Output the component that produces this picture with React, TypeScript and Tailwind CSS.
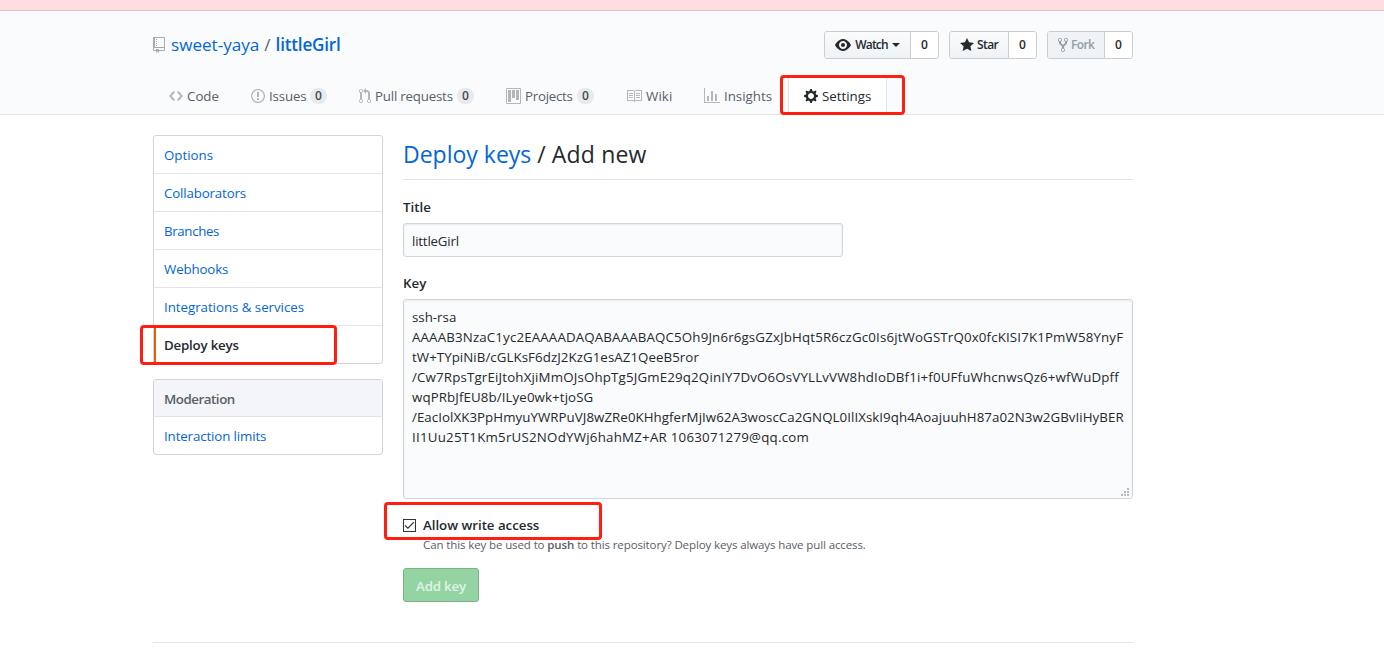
import type { ReactNode } from 'react';

const ICONS = {
    repo: 'M4 9H3V8h1v1zm0-3H3v1h1V6zm0-2H3v1h1V4zm0-2H3v1h1V2zm8-1v12c0 .55-.45 1-1 1H6v2l-1.5-1.5L3 16v-2H1c-.55 0-1-.45-1-1V1c0-.55.45-1 1-1h10c.55 0 1 .45 1 1zm-1 10H1v2h2v-1h3v1h5v-2zm0-10H2v9h9V1z',
    eye: 'M8.06 2C3 2 0 8 0 8s3 6 8.06 6C13 14 16 8 16 8s-3-6-7.94-6zM8 12c-2.2 0-4-1.78-4-4 0-2.2 1.8-4 4-4 2.22 0 4 1.8 4 4 0 2.22-1.78 4-4 4zm2-4c0 1.11-.89 2-2 2-1.11 0-2-.89-2-2 0-1.11.89-2 2-2 1.11 0 2 .89 2 2z',
    star: 'M14 6l-4.9-.64L7 1 4.9 5.36 0 6l3.6 3.26L2.67 14 7 11.67 11.33 14l-.93-4.74L14 6z',
    fork: 'M8 1a1.993 1.993 0 0 0-1 3.72V6L5 8 3 6V4.72A1.993 1.993 0 0 0 2 1a1.993 1.993 0 0 0-1 3.72V6.5l3 3v1.78A1.993 1.993 0 0 0 5 15a1.993 1.993 0 0 0 1-3.72V9.5l3-3V4.72A1.993 1.993 0 0 0 8 1zM2 4.2C1.34 4.2.8 3.65.8 3c0-.65.55-1.2 1.2-1.2.65 0 1.2.55 1.2 1.2 0 .65-.55 1.2-1.2 1.2zm3 10c-.66 0-1.2-.55-1.2-1.2 0-.65.55-1.2 1.2-1.2.65 0 1.2.55 1.2 1.2 0 .65-.55 1.2-1.2 1.2zm3-10c-.66 0-1.2-.55-1.2-1.2 0-.65.55-1.2 1.2-1.2.65 0 1.2.55 1.2 1.2 0 .65-.55 1.2-1.2 1.2z',
    code: 'M9.5 3L8 4.5 11.5 8 8 11.5 9.5 13 14 8 9.5 3zm-5 0L0 8l4.5 5L6 11.5 2.5 8 6 4.5 4.5 3z',
    issue: 'M7 2.3c3.14 0 5.7 2.56 5.7 5.7s-2.56 5.7-5.7 5.7A5.71 5.71 0 0 1 1.3 8c0-3.14 2.56-5.7 5.7-5.7zM7 1C3.14 1 0 4.14 0 8s3.14 7 7 7 7-3.14 7-7-3.14-7-7-7zm1 3H6v5h2V4zm0 6H6v2h2v-2z',
    pull: 'M11 11.28V5c-.03-.78-.34-1.47-.94-2.06C9.46 2.35 8.78 2.03 8 2H7V0L4 3l3 3V4h1c.27.02.48.11.69.31.21.2.3.42.31.69v6.28A1.993 1.993 0 0 0 10 15a1.993 1.993 0 0 0 1-3.72zm-1 2.92c-.66 0-1.2-.55-1.2-1.2 0-.65.55-1.2 1.2-1.2.65 0 1.2.55 1.2 1.2 0 .65-.55 1.2-1.2 1.2zM4 3c0-1.11-.89-2-2-2a1.993 1.993 0 0 0-1 3.72v6.56A1.993 1.993 0 0 0 2 15a1.993 1.993 0 0 0 1-3.72V4.72c.59-.34 1-.98 1-1.72zm-.8 10c0 .66-.55 1.2-1.2 1.2-.65 0-1.2-.55-1.2-1.2 0-.65.55-1.2 1.2-1.2.65 0 1.2.55 1.2 1.2zM2 4.2C1.34 4.2.8 3.65.8 3c0-.65.55-1.2 1.2-1.2.65 0 1.2.55 1.2 1.2 0 .65-.55 1.2-1.2 1.2z',
    project: 'M10 12h3V2h-3v10zm-4-2h3V2H6v8zm-4 4h3V2H2v12zm-1 1h13V1H1v14zM14 0H1a1 1 0 0 0-1 1v14a1 1 0 0 0 1 1h13a1 1 0 0 0 1-1V1a1 1 0 0 0-1-1z',
    book: 'M3 5h4v1H3V5zm0 3h4V7H3v1zm0 2h4V9H3v1zm11-5h-4v1h4V5zm0 2h-4v1h4V7zm0 2h-4v1h4V9zm2-6v9c0 .55-.45 1-1 1H9.5l-1 1-1-1H2c-.55 0-1-.45-1-1V3c0-.55.45-1 1-1h5.5l1 1 1-1H15c.55 0 1 .45 1 1zm-8 .5L7.5 3H2v9h6V3.5zm7-.5H9.5l-.5.5V12h6V3z',
    graph: 'M16 14v1H0V0h1v14h15zM5 13H3V8h2v5zm4 0H7V3h2v10zm4 0h-2V6h2v7z',
    gear: 'M14 8.77v-1.6l-1.94-.64-.45-1.09.88-1.84-1.13-1.13-1.81.91-1.09-.45-.69-1.92h-1.6l-.63 1.94-1.11.45-1.84-.88-1.13 1.13.91 1.81-.45 1.09L0 7.23v1.59l1.94.64.45 1.09-.88 1.84 1.13 1.13 1.81-.91 1.09.45.69 1.92h1.59l.63-1.94 1.11-.45 1.84.88 1.13-1.13-.92-1.81.47-1.09L14 8.75v.02zM7 11c-1.66 0-3-1.34-3-3s1.34-3 3-3 3 1.34 3 3-1.34 3-3 3z',
};

interface OcticonProps {
    name: keyof typeof ICONS;
    width: number;
    className?: string;
}

function Octicon({ name, width, className = '' }: OcticonProps) {
    return (
        <svg width={width} height={16} viewBox={`0 0 ${width} 16`} fill="currentColor" className={`shrink-0 ${className}`}>
            <path fillRule="evenodd" d={ICONS[name]} />
        </svg>
    );
}

interface SocialButtonProps {
    icon: ReactNode;
    label: string;
    labelClass: string;
    className: string;
    caret?: boolean;
    disabled?: boolean;
}

function SocialButton({ icon, label, labelClass, className, caret, disabled }: SocialButtonProps) {
    return (
        <div className={`flex h-7 overflow-hidden rounded-[3px] border border-[#cbced1] text-[12px] font-semibold ${className}`}>
            <button
                disabled={disabled}
                className={`flex flex-1 items-center border-r border-[#cbced1] pl-[10px] ${disabled ? 'bg-[#eff3f6] text-[#959da5]' : 'bg-linear-to-b from-[#fafbfc] to-[#eff3f6] text-[#24292e]'}`}
            >
                {icon}
                <span className={`pt-px whitespace-nowrap ${labelClass}`}>{label}</span>
                {caret && <span className="ml-[3px] border-x-4 border-t-4 border-x-transparent border-t-[#24292e]" />}
            </button>
            <span className="flex w-[27px] items-center justify-center bg-white pt-px text-[#24292e]">0</span>
        </div>
    );
}

interface TabProps {
    icon: keyof typeof ICONS;
    iconWidth: number;
    label: string;
    className: string;
    labelClass: string;
    count?: number;
}

function Tab({ icon, iconWidth, label, className, labelClass, count }: TabProps) {
    return (
        <a className={`flex h-full shrink-0 items-center text-[#586069] ${className}`}>
            <Octicon name={icon} width={iconWidth} className="text-[#b4b7ba]" />
            <span className={`whitespace-nowrap ${labelClass}`}>{label}</span>
            {count !== undefined && (
                <span className="ml-1 flex h-4 w-[17px] shrink-0 items-center justify-center rounded-full bg-[#e8e9eb] text-[12px] font-semibold text-[#444d56]">
                    {count}
                </span>
            )}
        </a>
    );
}

const MENU = [
    { label: 'Options', spacing: 'tracking-[0px]' },
    { label: 'Collaborators', spacing: 'tracking-[-0.15px]' },
    { label: 'Branches', spacing: 'tracking-[-0.35px]' },
    { label: 'Webhooks', spacing: 'tracking-[-0.15px]' },
    { label: 'Integrations & services', spacing: 'tracking-[-0.03px]' },
];

const KEY_LINES = [
    { text: 'ssh-rsa', spacing: 'tracking-[0px]' },
    { text: 'AAAAB3NzaC1yc2EAAAADAQABAAABAQC5Oh9Jn6r6gsGZxJbHqt5R6czGc0Is6jtWoGSTrQ0x0fcKISI7K1PmW58YnyF', spacing: 'tracking-[0.15px]' },
    { text: 'tW+TYpiNiB/cGLKsF6dzJ2KzG1esAZ1QeeB5ror', spacing: 'tracking-[0.06px]' },
    { text: '/Cw7RpsTgrEiJtohXjiMmOJsOhpTg5JGmE29q2QinIY7DvO6OsVYLLvVW8hdIoDBf1i+f0UFfuWhcnwsQz6+wfWuDpff', spacing: 'tracking-[0.165px]' },
    { text: 'wqPRbJfEU8b/ILye0wk+tjoSG', spacing: 'tracking-[0.1px]' },
    { text: '/EacIolXK3PpHmyuYWRPuVJ8wZRe0KHhgferMjIw62A3woscCa2GNQL0IlIXskI9qh4AoajuuhH87a02N3w2GBvIiHyBER', spacing: 'tracking-[0.055px]' },
    { text: 'II1Uu25T1Km5rUS2NOdYWj6hahMZ+AR 1063071279@qq.com', spacing: 'tracking-[0.235px]' },
];

function Highlight({ className }: { className: string }) {
    return <div className={`pointer-events-none absolute rounded-[4px] border-[3px] border-[#ff1e10] ${className}`} />;
}

export default function App() {
    return (
        <div className="relative h-[653px] w-[1384px] overflow-hidden bg-white font-['Open_Sans',sans-serif] text-[13.3px] leading-5 text-[#24292e]">
            <div className="h-[11px] border-b border-[#e6bcc1] bg-[#ffdce0]" />

            <header className="h-[104px] border-b border-[#e1e4e8] bg-[#fafbfc] pl-[153px]">
                <div className="flex h-full w-[980px] flex-col">
                    <div className="flex h-[68px] items-center justify-between">
                        <h1 className="flex items-center text-[17.1px] leading-6">
                            <Octicon name="repo" width={12} className="text-[#a3aab1]" />
                            <a className="ml-[6px] text-[#0366d6]">sweet-yaya</a>
                            <span className="mx-[5px] text-[#586069]">/</span>
                            <a className="font-semibold tracking-[-0.2px] text-[#0366d6]">littleGirl</a>
                        </h1>
                        <div className="flex gap-[10px]">
                            <SocialButton icon={<Octicon name="eye" width={16} />} label="Watch" labelClass="ml-[3px] w-[35px] tracking-[-0.8px]" className="w-[115px]" caret />
                            <SocialButton icon={<Octicon name="star" width={14} />} label="Star" labelClass="ml-[3px] tracking-[-0.6px]" className="w-[88px]" />
                            <SocialButton icon={<Octicon name="fork" width={10} />} label="Fork" labelClass="ml-[3px] tracking-[-0.6px]" className="w-[86px]" disabled />
                        </div>
                    </div>

                    <nav className="flex h-9 pl-4">
                        <Tab icon="code" iconWidth={14} label="Code" className="w-[82px]" labelClass="ml-1" />
                        <Tab icon="issue" iconWidth={14} label="Issues" className="w-[108px]" labelClass="ml-1 w-[37px] tracking-[-0.15px]" count={0} />
                        <Tab icon="pull" iconWidth={12} label="Pull requests" className="w-[147px]" labelClass="ml-1 w-[78px] tracking-[-0.2px]" count={0} />
                        <Tab icon="project" iconWidth={15} label="Projects" className="w-[120px]" labelClass="ml-1 w-[48px] tracking-[-0.25px]" count={0} />
                        <Tab icon="book" iconWidth={16} label="Wiki" className="w-[78px]" labelClass="ml-1 tracking-[0.1px]" />
                        <Tab icon="graph" iconWidth={16} label="Insights" className="w-[84px]" labelClass="ml-1" />
                        <a className="flex h-9 w-[99px] shrink-0 items-center border-x border-[#e1e4e8] bg-white pl-[15px]">
                            <Octicon name="gear" width={14} />
                            <span className="ml-1">Settings</span>
                        </a>
                    </nav>
                </div>
            </header>

            <main className="ml-[153px] flex w-[980px] pt-5">
                <aside className="flex w-[230px] shrink-0 flex-col gap-[15px]">
                    <nav className="rounded-[3px] border border-[#d1d5da]">
                        {MENU.map((item) => (
                            <a key={item.label} className={`flex h-[38px] items-center border-b border-[#e1e4e8] pl-[10px] text-[#0366d6] ${item.spacing}`}>
                                {item.label}
                            </a>
                        ))}
                        <a className="flex h-[37px] items-center border-l-2 border-[#e36209] pl-2 font-semibold tracking-[-0.2px]">Deploy keys</a>
                    </nav>
                    <nav className="overflow-hidden rounded-[3px] border border-[#d1d5da]">
                        <h3 className="flex h-[37px] items-center border-b border-[#e1e4e8] bg-[#f3f5f8] pl-[10px] pt-[2px] font-semibold tracking-[-0.45px] text-[#586069]">
                            Moderation
                        </h3>
                        <a className="flex h-[37px] items-center pl-[10px] tracking-[-0.12px] text-[#0366d6]">Interaction limits</a>
                    </nav>
                </aside>

                <section className="ml-5 w-[730px]">
                    <h2 className="h-[45px] border-b border-[#e1e4e8] text-[23px] leading-[38px] whitespace-nowrap">
                        <a className="text-[#0366d6]">Deploy keys</a> / <span className="tracking-[0.2px]">Add new</span>
                    </h2>

                    <label className="mt-[17px] block font-semibold">Title</label>
                    <div className="mt-[6px] flex h-[34px] w-[440px] items-center rounded-[3px] border border-[#d1d5da] bg-[#fafbfc] px-2 pt-px tracking-[-0.2px] shadow-[inset_0_1px_2px_rgba(27,31,35,0.075)]">
                        littleGirl
                    </div>

                    <label className="mt-4 block font-semibold">Key</label>
                    <div className="relative mt-[6px] h-[200px] rounded-[3px] border border-[#d1d5da] bg-[#fafbfc] px-2 py-[7px] shadow-[inset_0_1px_2px_rgba(27,31,35,0.075)]">
                        {KEY_LINES.map((line) => (
                            <div key={line.text} className="h-5 whitespace-nowrap">
                                <span className={line.spacing}>{line.text}</span>
                            </div>
                        ))}
                        <svg width="8" height="8" viewBox="0 0 8 8" fill="#b9babb" className="absolute right-[3px] bottom-[2px]">
                            <path d="M6 0h2v2H6zM3 3h2v2H3zM6 3h2v2H6zM0 6h2v2H0zM3 6h2v2H3zM6 6h2v2H6z" />
                        </svg>
                    </div>

                    <div className="mt-4 flex h-5 items-center">
                        <svg width="13" height="13" viewBox="0 0 13 13">
                            <rect x="0.5" y="0.5" width="12" height="12" fill="#fff" stroke="#333" />
                            <path d="M2 6.3l2.9 2.9 6-6" fill="none" stroke="#333" strokeWidth="1.2" />
                        </svg>
                        <label className="ml-[7px] font-semibold tracking-[-0.03px]">Allow write access</label>
                    </div>
                    <p className="ml-5 h-5 text-[11.5px] whitespace-nowrap tracking-[-0.11px] text-[#586069]">
                        Can this key be used to <strong className="font-semibold">push</strong> to this repository? Deploy keys always have pull access.
                    </p>
                    <button className="mt-[13px] flex h-[34px] w-[76px] items-center justify-center rounded-[3px] border border-[#7cb08a] bg-[#94d3a2] pt-[2px] font-semibold tracking-[-0.2px] text-[#e0f3e4]">
                        Add key
                    </button>
                </section>
            </main>

            <footer className="mt-10 ml-[153px] w-[980px] border-t border-[#e1e4e8]" />

            <Highlight className="top-[75px] left-[780px] h-10 w-[125px]" />
            <Highlight className="top-[325px] left-[140px] h-10 w-[197px]" />
            <Highlight className="top-[502px] left-[384px] h-[38px] w-[218px]" />
        </div>
    );
}
